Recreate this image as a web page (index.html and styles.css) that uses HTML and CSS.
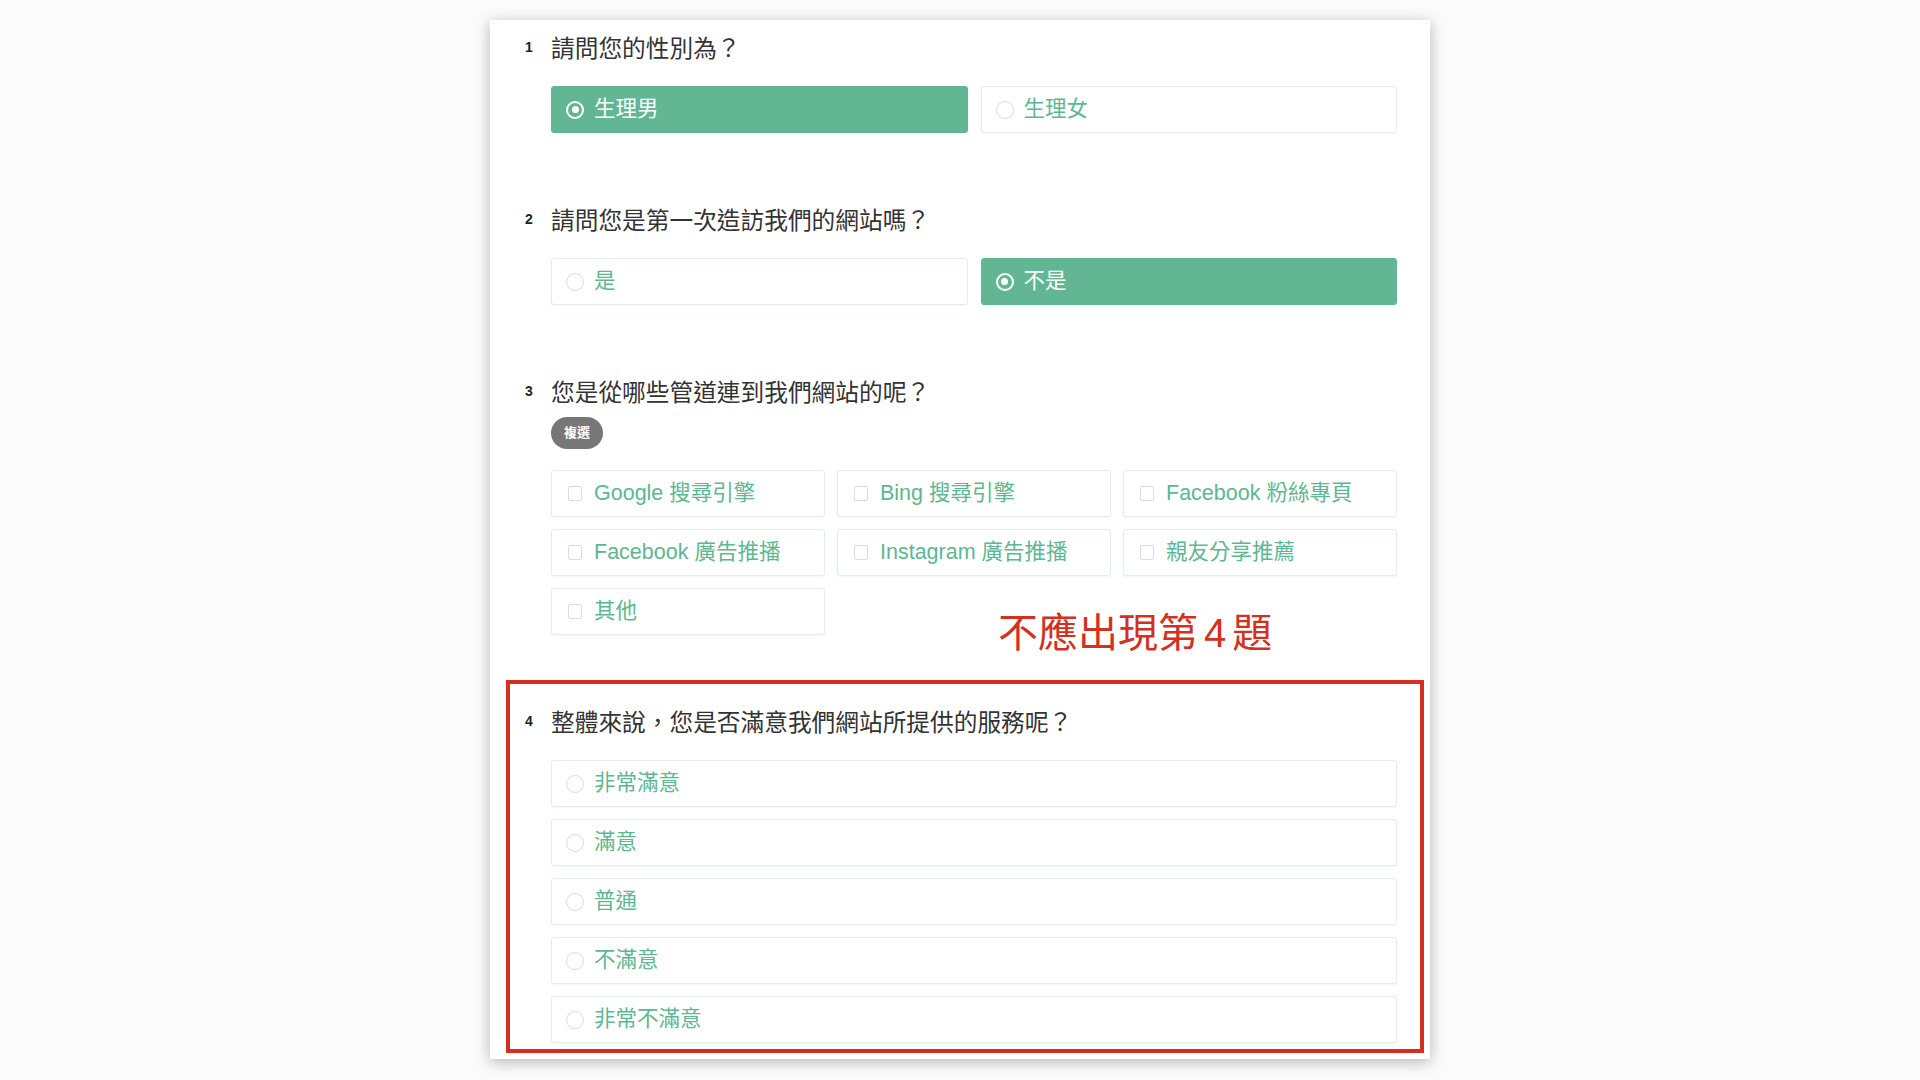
FILE: index.html
```html
<!DOCTYPE html>
<html lang="zh-Hant">
<head>
<meta charset="utf-8">
<title>問卷</title>
<link rel="stylesheet" href="styles.css">
</head>
<body>
<div class="card">
  <section class="question">
    <div class="q-head"><span class="q-num">1</span><h2 class="q-title">請問您的性別為？</h2></div>
    <div class="options two">
      <div class="option selected"><span class="radio"></span><span class="label">生理男</span></div>
      <div class="option"><span class="radio"></span><span class="label">生理女</span></div>
    </div>
  </section>
  <section class="question">
    <div class="q-head"><span class="q-num">2</span><h2 class="q-title">請問您是第一次造訪我們的網站嗎？</h2></div>
    <div class="options two">
      <div class="option"><span class="radio"></span><span class="label">是</span></div>
      <div class="option selected"><span class="radio"></span><span class="label">不是</span></div>
    </div>
  </section>
  <section class="question">
    <div class="q-head"><span class="q-num">3</span><h2 class="q-title">您是從哪些管道連到我們網站的呢？</h2></div>
    <span class="badge">複選</span>
    <div class="options three">
      <div class="option"><span class="check"></span><span class="label">Google 搜尋引擎</span></div>
      <div class="option"><span class="check"></span><span class="label">Bing 搜尋引擎</span></div>
      <div class="option"><span class="check"></span><span class="label">Facebook 粉絲專頁</span></div>
      <div class="option"><span class="check"></span><span class="label">Facebook 廣告推播</span></div>
      <div class="option"><span class="check"></span><span class="label">Instagram 廣告推播</span></div>
      <div class="option"><span class="check"></span><span class="label">親友分享推薦</span></div>
      <div class="option"><span class="check"></span><span class="label">其他</span></div>
    </div>
  </section>
  <section class="question">
    <div class="q-head"><span class="q-num">4</span><h2 class="q-title">整體來說，您是否滿意我們網站所提供的服務呢？</h2></div>
    <div class="options one">
      <div class="option"><span class="radio"></span><span class="label">非常滿意</span></div>
      <div class="option"><span class="radio"></span><span class="label">滿意</span></div>
      <div class="option"><span class="radio"></span><span class="label">普通</span></div>
      <div class="option"><span class="radio"></span><span class="label">不滿意</span></div>
      <div class="option"><span class="radio"></span><span class="label">非常不滿意</span></div>
    </div>
  </section>
  <div class="note">不應出現第<span class="digit">4</span>題</div>
  <div class="highlight"></div>
</div>
</body>
</html>
```
FILE: styles.css
```css
html, body {
  margin: 0;
  padding: 0;
}
body {
  background: #fbfbfb;
  font-family: "Liberation Sans", "Noto Sans CJK TC", sans-serif;
  width: 1920px;
  height: 1080px;
  overflow: hidden;
}
.card {
  position: relative;
  box-sizing: border-box;
  width: 940px;
  margin: 20px 0 0 490px;
  padding: 13px 33px 16px 35px;
  background: #fff;
  box-shadow: 0 3px 14px rgba(0, 0, 0, 0.28);
}
.question + .question {
  margin-top: 72px;
}
.q-head {
  display: flex;
  height: 32px;
}
.q-num {
  width: 26px;
  flex: none;
  font-size: 14px;
  font-weight: bold;
  line-height: 14px;
  padding-top: 7px;
  color: #222;
}
.q-title {
  margin: 0;
  font-size: 23.7px;
  font-weight: normal;
  line-height: 32px;
  color: #333;
  font-family: "Liberation Sans", "Noto Sans CJK TC", sans-serif;
  white-space: nowrap;
}
.badge {
  display: block;
  width: 52px;
  height: 32px;
  margin: 8px 0 0 26px;
  border-radius: 16px;
  background: #777;
  color: #fff;
  font-size: 13px;
  font-weight: bold;
  line-height: 32px;
  text-align: center;
}
.options {
  display: grid;
  margin: 21px 0 0 26px;
  gap: 12px;
}
.badge + .options {
  margin-top: 21px;
}
.options.two {
  grid-template-columns: 1fr 1fr;
  column-gap: 13px;
}
.options.three {
  grid-template-columns: 1fr 1fr 1fr;
  column-gap: 12px;
}
.options.one {
  grid-template-columns: 1fr;
}
.option {
  box-sizing: border-box;
  height: 47px;
  display: flex;
  align-items: center;
  padding-left: 14px;
  border: 1px solid #e6ecea;
  border-radius: 3px;
  background: #fff;
  box-shadow: 0 1px 2px rgba(0, 0, 0, 0.04);
  color: #5db792;
  font-size: 21.5px;
}
.option.selected {
  background: #62b694;
  border-color: #62b694;
  color: #fff;
}
.radio {
  box-sizing: border-box;
  width: 18px;
  height: 18px;
  flex: none;
  border: 1.5px solid #dcdcdc;
  border-radius: 50%;
  margin-right: 10px;
  position: relative;
}
.selected .radio {
  border: 2.5px solid #fff;
}
.selected .radio::after {
  content: "";
  position: absolute;
  left: 50%;
  top: 50%;
  width: 7px;
  height: 7px;
  margin: -3.5px 0 0 -3.5px;
  border-radius: 50%;
  background: #fff;
}
.check {
  box-sizing: border-box;
  width: 14px;
  height: 15px;
  flex: none;
  margin-left: 2px;
  margin-right: 12px;
  border: 1.5px solid #dcdcdc;
  border-radius: 2px;
}
.label {
  line-height: 1;
  white-space: nowrap;
}
.note {
  position: absolute;
  left: 508px;
  top: 591px;
  font-size: 40px;
  line-height: 44px;
  color: #d3301f;
  font-family: "Liberation Sans", "Noto Sans CJK TC", sans-serif;
  white-space: nowrap;
}
.note .digit {
  margin: 0 6px;
}
.highlight {
  position: absolute;
  left: 16px;
  top: 660px;
  width: 918px;
  height: 373px;
  box-sizing: border-box;
  border: 4px solid #d5301f;
  pointer-events: none;
}
```
